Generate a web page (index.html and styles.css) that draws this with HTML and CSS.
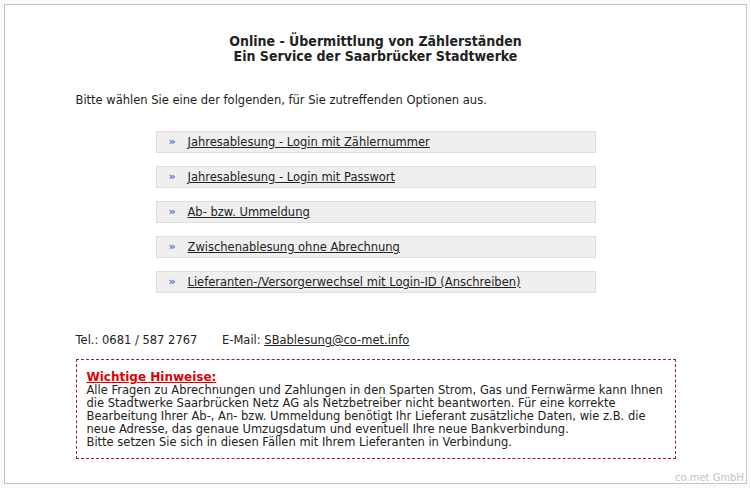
FILE: index.html
```html
<!DOCTYPE html>
<html lang="de">
<head>
    <meta charset="utf-8">
    <title>Online - Übermittlung von Zählerständen</title>
    <link rel="stylesheet" href="styles.css">
</head>
<body>
    <div class="frame">
        <div class="content">
            <h1 class="title">Online - Übermittlung von Zählerständen<br>Ein Service der Saarbrücker Stadtwerke</h1>

            <p class="intro">Bitte wählen Sie eine der folgenden, für Sie zutreffenden Optionen aus.</p>

            <ul class="options">
                <li><span class="arrow">»</span><a href="#">Jahresablesung - Login mit Zählernummer</a></li>
                <li><span class="arrow">»</span><a href="#">Jahresablesung - Login mit Passwort</a></li>
                <li><span class="arrow">»</span><a href="#">Ab- bzw. Ummeldung</a></li>
                <li><span class="arrow">»</span><a href="#">Zwischenablesung ohne Abrechnung</a></li>
                <li><span class="arrow">»</span><a href="#">Lieferanten-/Versorgerwechsel mit Login-ID (Anschreiben)</a></li>
            </ul>

            <p class="contact">
                <span class="phone">Tel.: 0681 / 587 2767</span>
                E-Mail: <a href="#">SBablesung@co-met.info</a>
            </p>

            <div class="notice">
                <a class="notice-title" href="#">Wichtige Hinweise:</a><br>
                Alle Fragen zu Abrechnungen und Zahlungen in den Sparten Strom, Gas und Fernwärme kann Ihnen<br>
                die Stadtwerke Saarbrücken Netz AG als Netzbetreiber nicht beantworten. Für eine korrekte<br>
                Bearbeitung Ihrer Ab-, An- bzw. Ummeldung benötigt Ihr Lieferant zusätzliche Daten, wie z.B. die<br>
                neue Adresse, das genaue Umzugsdatum und eventuell Ihre neue Bankverbindung.<br>
                Bitte setzen Sie sich in diesen Fällen mit Ihrem Lieferanten in Verbindung.
            </div>
        </div>
        <div class="footer">co.met GmbH</div>
    </div>
</body>
</html>
```

FILE: styles.css
```css
body {
    margin: 4px;
    padding: 0;
    background-color: #fbfbfb;
    font-family: "DejaVu Sans", sans-serif;
    font-size: 11.5px;
    color: #222;
}

.frame {
    height: 478px;
    border: 1px solid #c4c4c4;
    background-color: #fff;
    box-shadow: 1px 1px 0 #e4e4e4;
    display: flex;
    flex-direction: column;
}

.content {
    width: 600px;
    margin: 0 auto;
    flex: 1;
}

.title {
    margin: 29px 0 0 0;
    font-family: "DejaVu Sans Condensed", "DejaVu Sans", sans-serif;
    font-size: 14px;
    line-height: 15px;
    font-weight: bold;
    text-align: center;
    color: #222;
}

.intro {
    margin: 29px 0 0 0;
    line-height: 14px;
}

.options {
    list-style: none;
    margin: 24px auto 0 auto;
    padding: 0;
    width: 440px;
}

.options li {
    height: 20px;
    line-height: 20px;
    margin-bottom: 13px;
    background-color: #efefef;
    border: 1px solid #dedede;
}

.arrow {
    display: inline-block;
    width: 31px;
    padding-left: 12px;
    box-sizing: border-box;
    color: #4d6fdc;
    font-weight: bold;
    font-size: 11px;
    vertical-align: top;
}

.options a {
    color: #222;
}

.contact {
    margin: 40px 0 0 0;
    line-height: 14px;
}

.phone {
    margin-right: 21px;
}

.contact a {
    color: #222;
}

.notice {
    margin-top: 12px;
    border: 1px dashed #b0103c;
    padding: 11px 6px 9px 10px;
    line-height: 13px;
    white-space: nowrap;
}

.notice-title {
    color: #e00000;
    font-weight: bold;
    font-size: 12px;
}

.footer {
    text-align: right;
    color: #c4c4c4;
    padding: 0 2px 0 0;
    font-size: 10px;
}
```
